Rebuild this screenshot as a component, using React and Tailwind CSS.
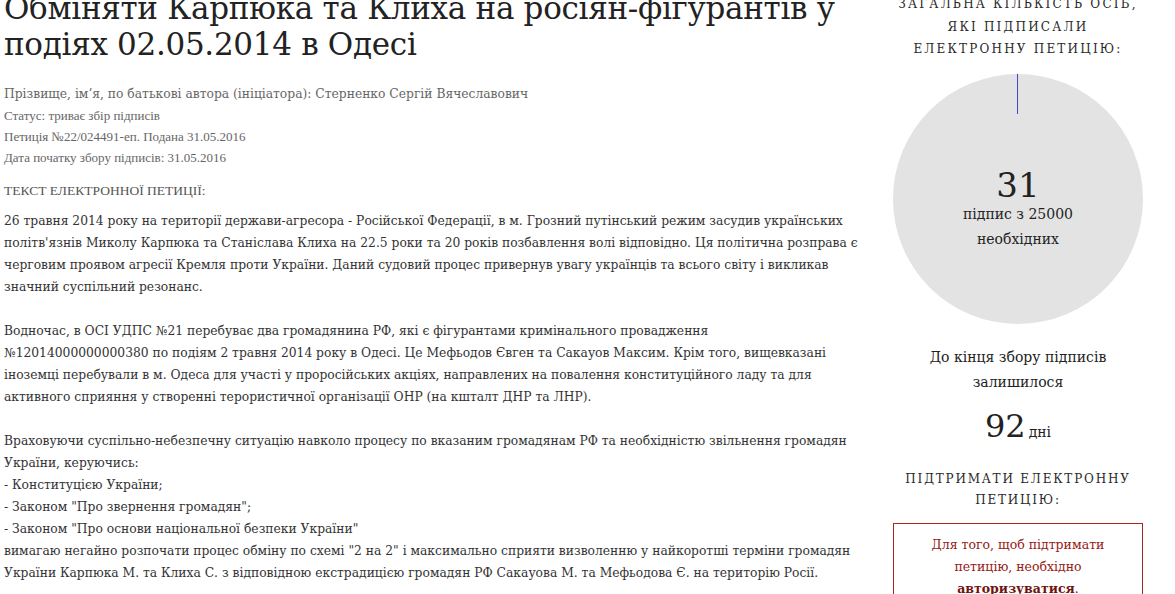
import React from 'react';

const serif = { fontFamily: '"DejaVu Serif", "Liberation Serif", serif' };
const narrow = { fontFamily: '"Liberation Serif", "DejaVu Serif", serif' };

const meta = [
  'Статус: триває збір підписів',
  'Петиція №22/024491-еп. Подана 31.05.2016',
  'Дата початку збору підписів: 31.05.2016',
];

const paragraphs = [
  [
    '26 травня 2014 року на території держави-агресора - Російської Федерації, в м. Грозний путінський режим засудив українських',
    "політв'язнів Миколу Карпюка та Станіслава Клиха на 22.5 роки та 20 років позбавлення волі відповідно. Ця політична розправа є",
    'черговим проявом агресії Кремля проти України. Даний судовий процес привернув увагу українців та всього світу і викликав',
    'значний суспільний резонанс.',
  ],
  [
    'Водночас, в ОСІ УДПС №21 перебуває два громадянина РФ, які є фігурантами кримінального провадження',
    '№12014000000000380 по подіям 2 травня 2014 року в Одесі. Це Мефьодов Євген та Сакауов Максим. Крім того, вищевказані',
    'іноземці перебували в м. Одеса для участі у проросійських акціях, направлених на повалення конституційного ладу та для',
    'активного сприяння у створенні терористичної організації ОНР (на кшталт ДНР та ЛНР).',
  ],
  [
    'Враховуючи суспільно-небезпечну ситуацію навколо процесу по вказаним громадянам РФ та необхідністю звільнення громадян',
    'України, керуючись:',
    '- Конституцією України;',
    '- Законом "Про звернення громадян";',
    '- Законом "Про основи національної безпеки України"',
    'вимагаю негайно розпочати процес обміну по схемі "2 на 2" і максимально сприяти визволенню у найкоротші терміни громадян',
    'України Карпюка М. та Клиха С. з відповідною екстрадицією громадян РФ Сакауова М. та Мефьодова Є. на територію Росії.',
  ],
];

export default function App() {
  return (
    <div className="w-[1175px] h-[594px] overflow-hidden bg-white">
      <div className="flex gap-[23px] pl-[4px] -mt-[10px]" style={serif}>
        {/* Left column */}
        <div className="w-[866px] text-[#333]">
          <h1 className="text-[31px] leading-[36px] font-normal text-[#222] tracking-[-0.3px]">
            Обміняти Карпюка та Клиха на росіян-фігурантів у<br />подіях 02.05.2014 в Одесі
          </h1>

          <div className="mt-[22px] text-[#666]">
            <p className="text-[12.3px] leading-[21px]">
              Прізвище, ім’я, по батькові автора (ініціатора): Стерненко Сергій Вячеславович
            </p>
            {meta.map((m, i) => (
              <p key={i} className="text-[13px] leading-[21px]" style={narrow}>{m}</p>
            ))}
          </div>

          <p className="mt-[12px] text-[13.5px] leading-[21px] text-[#555]" style={narrow}>
            ТЕКСТ ЕЛЕКТРОННОЇ ПЕТИЦІЇ:
          </p>

          <div className="mt-[9px] text-[12.3px] leading-[22px] whitespace-nowrap">
            {paragraphs.map((p, i) => (
              <p key={i} className={i > 0 ? 'mt-[22px]' : ''}>
                {p.map((line, j) => (
                  <span key={j} className="block">{line}</span>
                ))}
              </p>
            ))}
          </div>
        </div>

        {/* Right column */}
        <div className="w-[250px] pt-[3px] text-center text-[#222]">
          <p className="text-[12px] leading-[22.5px] uppercase tracking-[2.2px] text-[#2a2a2a]">
            Загальна кількість осіб,<br />які підписали<br />електронну петицію:
          </p>

          <div className="relative mt-[13px] w-[250px] h-[250px] rounded-full bg-[#e3e3e3] flex flex-col items-center pt-[93px]">
            <div className="absolute top-0 left-[124px] w-[1px] h-[40px] bg-[#4444cc]" />
            <div className="text-[34px] leading-[36px]">31</div>
            <div className="text-[14px] leading-[25px] -mt-[1px]">підпис з 25000<br />необхідних</div>
          </div>

          <p className="mt-[21px] text-[14px] leading-[25px]">
            До кінця збору підписів<br />залишилося
          </p>
          <div className="mt-[11px] flex items-baseline justify-center gap-[3px]">
            <span className="text-[32px] leading-[40px]">92</span>
            <span className="text-[14px]">дні</span>
          </div>

          <p className="mt-[23px] text-[12px] leading-[21px] uppercase tracking-[1.8px] text-[#2a2a2a]">
            Підтримати електронну<br />петицію:
          </p>

          <div className="mt-[12px] border border-[#a8281e] px-[10px] py-[10px] text-[12.5px] leading-[22px] text-[#952016]">
            Для того, щоб підтримати<br />петицію, необхідно<br />
            <span className="font-bold text-[#6e1410]">авторизуватися</span>.
          </div>
        </div>
      </div>
    </div>
  );
}
